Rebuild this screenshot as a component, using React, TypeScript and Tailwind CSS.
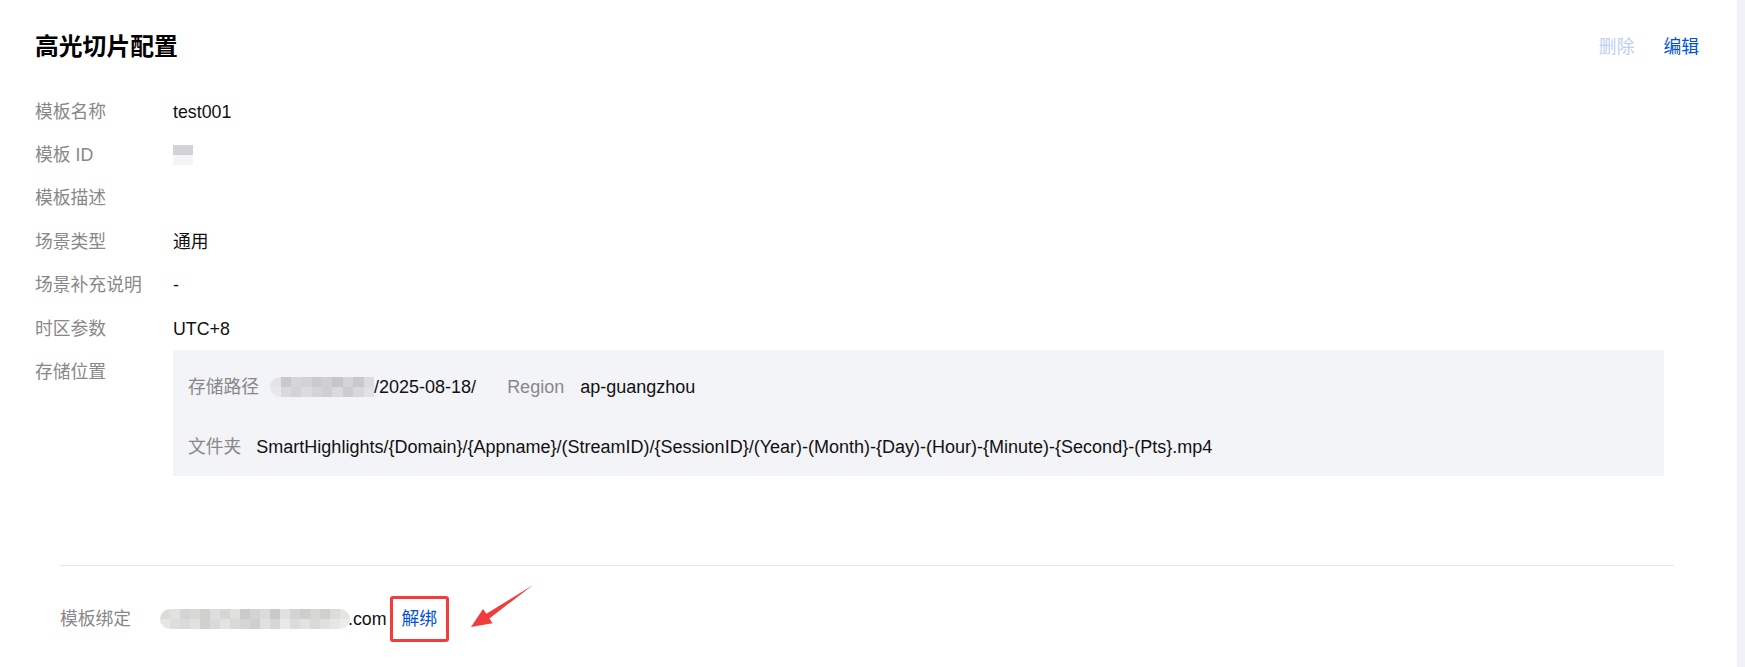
import React from "react";

const FONT = {
  fontFamily:
    '"Liberation Sans", Arial, "Noto Sans CJK SC", sans-serif',
};

function Mosaic({
  cols,
  colors,
  cell = 10,
  className = "",
}: {
  cols: number;
  colors: string[][];
  cell?: number;
  className?: string;
}) {
  return (
    <span
      className={"inline-flex flex-col overflow-hidden rounded-l-full blur-[0.6px] " + className}
    >
      {colors.map((row, r) => (
        <span key={r} className="flex">
          {Array.from({ length: cols }).map((_, c) => (
            <span
              key={c}
              style={{ width: cell, height: 10, background: row[c % row.length] }}
            />
          ))}
        </span>
      ))}
    </span>
  );
}

function Row({ label, children }: { label: string; children?: React.ReactNode }) {
  return (
    <div className="flex h-[43.4px] items-center">
      <div className="w-[138px] shrink-0 text-[#888888]">{label}</div>
      <div className="text-[#111111]">{children}</div>
    </div>
  );
}

export default function App() {
  return (
    <div className="flex h-[667px] w-full bg-white text-[17.8px] leading-[26px]" style={FONT}>
      <div className="relative flex-1 pl-[35px] pr-[38px] pt-[31px]">
        {/* header */}
        <div className="flex h-[32px] items-center justify-between">
          <h1 className="text-[23.8px] font-bold leading-[32px] text-black">高光切片配置</h1>
          <div className="flex items-center gap-[29px]">
            <span className="text-[#bcd0f6]">删除</span>
            <span className="text-[#0052d9]">编辑</span>
          </div>
        </div>

        {/* details */}
        <div className="mr-[35px] mt-[27px]">
          <Row label="模板名称">test001</Row>
          <Row label="模板 ID">
            <span className="flex flex-col">
              <span className="h-[10px] w-[20px] bg-[#d2d2d8]" />
              <span className="h-[10px] w-[20px] bg-[#f5f5f7]" />
            </span>
          </Row>
          <Row label="模板描述" />
          <Row label="场景类型">通用</Row>
          <Row label="场景补充说明">-</Row>
          <Row label="时区参数">UTC+8</Row>
          <div className="flex">
            <div className="flex h-[43.4px] w-[138px] shrink-0 items-center text-[#888888]">
              存储位置
            </div>
            <div className="flex-1 bg-[#f3f4f7] pb-[16px] pl-[15px] pt-[24px]">
              <div className="flex h-[26px] items-center">
                <span className="text-[#888888]">存储路径</span>
                <Mosaic
                  className="ml-[11px]"
                  cols={10}
                  cell={10.4}
                  colors={[
                    ["#e4e4e6", "#c9c9cd", "#d6d6d9", "#d3d3d6", "#cbcbcf", "#d0d0d3", "#c6c6ca", "#d4d4d7", "#c9c9cd", "#dcdcdf"],
                    ["#e8e8ea", "#d9d9dc", "#d3d3d6", "#dcdcdf", "#d5d5d8", "#cfcfd2", "#dadadd", "#cdcdd0", "#d8d8db", "#e2e2e4"],
                  ]}
                />
                <span className="text-[18px] text-[#111111]">/2025-08-18/</span>
                <span className="ml-[31px] text-[18px] text-[#888888]">Region</span>
                <span className="ml-[16px] text-[18px] text-[#111111]">ap-guangzhou</span>
              </div>
              <div className="mt-[34px] flex h-[26px] items-center">
                <span className="text-[#888888]">文件夹</span>
                <span className="ml-[15px] text-[18px] text-[#111111]">
                  SmartHighlights/{"{Domain}"}/{"{Appname}"}/(StreamID)/{"{SessionID}"}/(Year)-(Month)-{"{Day)"}-(Hour)-{"{Minute)"}-{"{Second}"}-(Pts{"}"}.mp4
                </span>
              </div>
            </div>
          </div>
        </div>

        {/* binding section */}
        <div className="mx-[25px] mt-[89px] border-t border-[#e7e7e7] pt-[30px]">
          <div className="flex h-[46px] items-center">
            <div className="w-[100px] shrink-0 text-[#888888]">模板绑定</div>
            <Mosaic
              cols={19}
              cell={10}
              className="rounded-r-full"
              colors={[
                ["#dcdcda", "#e2e2e0", "#d2d4d6", "#d8d8d6", "#cfcfcd", "#dedede", "#d6d6d4", "#e0e0de", "#cacaca", "#d3d3d1", "#dbdbd9", "#c9c9c9", "#e1e1e3", "#d4d4d2", "#cdcdcb", "#d6d6d4", "#cfcfcd", "#dcdcda", "#e4e4e2"],
                ["#e6e6e4", "#dededc", "#d8dadc", "#e1e1df", "#d0d0ce", "#d9d9d7", "#e3e3e1", "#dadad8", "#d5d5d3", "#cfcfcf", "#e0e0de", "#d6d6d6", "#e9e9eb", "#dcdcda", "#e2e2e0", "#d9d9d7", "#e0e0de", "#e6e6e4", "#ececea"],
              ]}
            />
            <span className="-ml-[2px] text-[#111111]">.com</span>
            <span className="ml-[3px] inline-flex items-center rounded-[3px] border-[3px] border-[#f23d3d] px-[9px] py-[7px] text-[#0052d9]">
              解绑
            </span>
          </div>
        </div>

        {/* annotation arrow */}
        <svg
          className="pointer-events-none absolute left-0 top-0"
          width="600"
          height="667"
          viewBox="0 0 600 667"
        >
          <polygon
            points="533,585 489.4,618.4 492.6,623.2 471,627 483,609 486.4,613.8"
            fill="#f03c3c"
          />
        </svg>
      </div>
      <div className="w-[8px] shrink-0 bg-[#f1f2f5]" />
    </div>
  );
}
